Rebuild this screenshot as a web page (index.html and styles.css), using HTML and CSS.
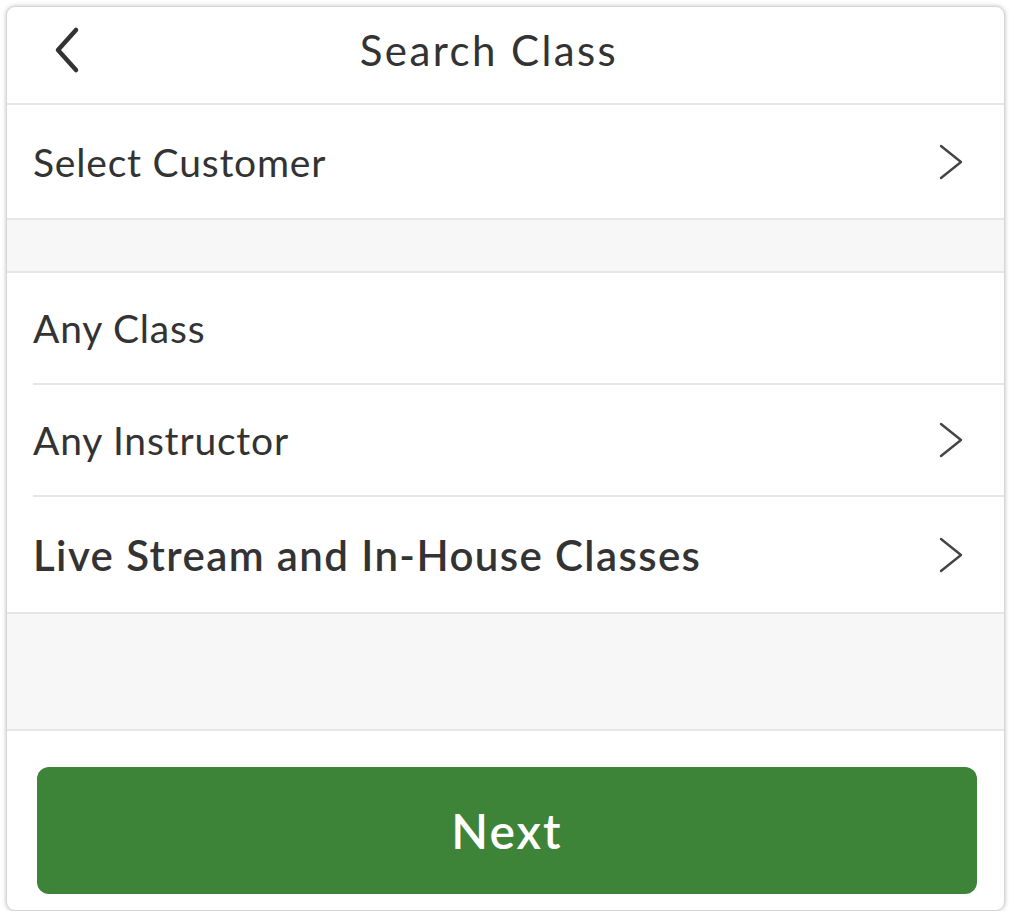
FILE: index.html
```html
<!DOCTYPE html>
<html lang="en">
<head>
<meta charset="utf-8">
<title>Search Class</title>
<link rel="stylesheet" href="styles.css">
</head>
<body>
<div class="screen">
  <header class="topbar">
    <span class="back">
      <svg width="30" height="48" viewBox="0 0 30 48"><path d="M24 4 L6 24 L24 44" fill="none" stroke="#333" stroke-width="4.5" stroke-linecap="round" stroke-linejoin="round"/></svg>
    </span>
    <h1 class="title">Search Class</h1>
  </header>
  <div class="row first">
    <span class="label">Select Customer</span>
    <svg class="chev" width="26" height="38" viewBox="0 0 26 38"><path d="M3 3 L23 19 L3 35" fill="none" stroke="#444" stroke-width="2.4" stroke-linecap="round" stroke-linejoin="round"/></svg>
  </div>
  <div class="gap"></div>
  <div class="group">
    <div class="row inset">
      <span class="label">Any Class</span>
    </div>
    <div class="row inset">
      <span class="label">Any Instructor</span>
      <svg class="chev" width="26" height="38" viewBox="0 0 26 38"><path d="M3 3 L23 19 L3 35" fill="none" stroke="#444" stroke-width="2.4" stroke-linecap="round" stroke-linejoin="round"/></svg>
    </div>
    <div class="row tall">
      <span class="label strong">Live Stream and In-House Classes</span>
      <svg class="chev" width="26" height="38" viewBox="0 0 26 38"><path d="M3 3 L23 19 L3 35" fill="none" stroke="#444" stroke-width="2.4" stroke-linecap="round" stroke-linejoin="round"/></svg>
    </div>
  </div>
  <div class="spacer"></div>
  <footer class="footer">
    <button class="next">Next</button>
  </footer>
</div>
</body>
</html>
```
FILE: styles.css
```css
html, body {
  margin: 0;
  padding: 0;
  background: #ffffff;
}
body {
  padding: 6px 8px 0 6px;
  font-family: Lato, "Liberation Sans", sans-serif;
  color: #333333;
}
.screen {
  width: 999px;
  height: 905px;
  box-sizing: border-box;
  border: 1px solid #d6d6d6;
  border-radius: 9px;
  box-shadow: 0 0 4px rgba(0, 0, 0, 0.25);
  background: #ffffff;
  overflow: hidden;
  display: flex;
  flex-direction: column;
}
.topbar {
  height: 96px;
  flex: none;
  border-bottom: 2px solid #e6e6e6;
  position: relative;
  display: flex;
  align-items: center;
  justify-content: center;
}
.back {
  position: absolute;
  left: 45px;
  top: 19px;
  display: block;
  line-height: 0;
}
.title {
  margin: 0 0 10px 0;
  font-size: 42px;
  font-weight: 400;
  color: #333333;
  padding-right: 33px;
  letter-spacing: 2.4px;
}
.row {
  height: 113px;
  flex: none;
  display: flex;
  align-items: center;
  justify-content: space-between;
  padding: 0 40px 0 26px;
  border-bottom: 2px solid #e6e6e6;
  box-sizing: border-box;
}
.row.first {
  height: 115px;
}
.label {
  font-size: 39px;
  color: #333333;
  letter-spacing: 0.8px;
}
.label.strong {
  font-size: 42px;
  font-weight: 600;
  letter-spacing: 1.4px;
}
.chev {
  display: block;
}
.gap {
  height: 51px;
  flex: none;
  background: #f7f7f7;
  border-bottom: 2px solid #e6e6e6;
}
.group {
  display: flex;
  flex-direction: column;
}
.row.inset {
  height: 112px;
  margin-left: 26px;
  padding-left: 0;
}
.row.tall {
  height: 117px;
}
.spacer {
  height: 115px;
  flex: none;
  background: #f7f7f7;
  border-bottom: 2px solid #e6e6e6;
}
.footer {
  flex: 1;
  padding: 36px 27px 0 30px;
}
.next {
  width: 940px;
  height: 127px;
  border: none;
  border-radius: 12px;
  background: #3d8338;
  color: #ffffff;
  font-family: Lato, "Liberation Sans", sans-serif;
  font-size: 48px;
  font-weight: 600;
  letter-spacing: 2px;
  display: block;
  padding: 0;
}
```
